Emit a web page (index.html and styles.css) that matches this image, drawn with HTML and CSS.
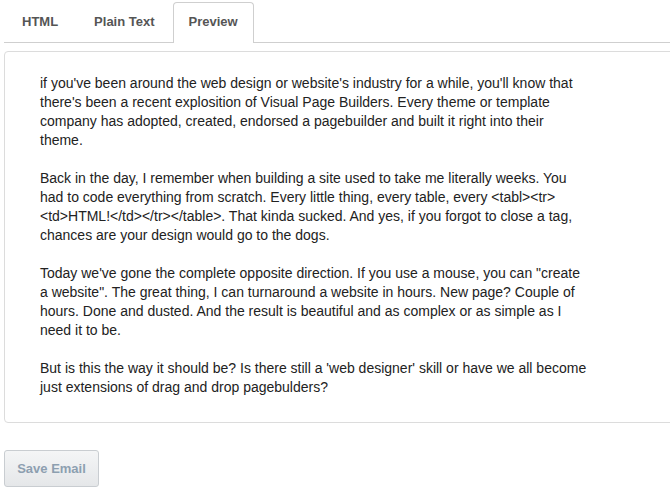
FILE: index.html
```html
<!DOCTYPE html>
<html>
<head>
<meta charset="utf-8">
<link rel="stylesheet" href="styles.css">
</head>
<body>
<div class="page">
  <div class="tabs">
    <div class="tab">HTML</div>
    <div class="tab">Plain Text</div>
    <div class="tab active">Preview</div>
  </div>
  <div class="panel">
    <div class="content">
      <p>if you've been around the web design or website's industry for a while, you'll know that there's been a recent explosition of Visual Page Builders. Every theme or template company has adopted, created, endorsed a pagebuilder and built it right into their theme.</p>
      <p>Back in the day, I remember when building a site used to take me literally weeks. You had to code everything from scratch. Every little thing, every table, every &lt;tabl&gt;&lt;tr&gt;&lt;td&gt;HTML!&lt;/td&gt;&lt;/tr&gt;&lt;/table&gt;. That kinda sucked. And yes, if you forgot to close a tag, chances are your design would go to the dogs.</p>
      <p>Today we've gone the complete opposite direction. If you use a mouse, you can "create a website". The great thing, I can turnaround a website in hours. New page? Couple of hours. Done and dusted. And the result is beautiful and as complex or as simple as I need it to be.</p>
      <p>But is this the way it should be? Is there still a 'web designer' skill or have we all become just extensions of drag and drop pagebulders?</p>
    </div>
  </div>
  <button class="save">Save Email</button>
</div>
</body>
</html>
```
FILE: styles.css
```css
html {
  overflow: hidden;
}
body {
  margin: 0;
  background: #fff;
  font-family: "Liberation Sans", Arial, sans-serif;
}
.page {
  padding: 2px 0 0 4px;
}
.tabs {
  display: flex;
  border-bottom: 1px solid #cfcfcf;
  height: 40px;
  margin-right: -10px;
}
.tab {
  padding: 0 17px;
  font-size: 13px;
  font-weight: bold;
  color: #555;
  line-height: 38px;
  height: 40px;
  box-sizing: border-box;
  border: 1px solid transparent;
  border-bottom: none;
}
.tab.active {
  padding: 0 15px;
  background: #fff;
  border-color: #cfcfcf;
  border-radius: 4px 4px 0 0;
  height: 41px;
  margin-bottom: -1px;
}
.panel {
  margin-top: 8px;
  margin-right: -10px;
  border: 1px solid #dcdcdc;
  border-radius: 4px;
  padding: 22px 35px 25px;
}
.content {
  width: 548px;
  font-size: 14px;
  line-height: 19px;
  color: #222;
}
.content p {
  margin: 0 0 19px;
}
.content p:last-child {
  margin-bottom: 0;
}
.save {
  margin-top: 27px;
  width: 95px;
  height: 37px;
  border: 1px solid #c9cdd1;
  border-radius: 3px;
  background: linear-gradient(#f4f5f6, #e5e7e9);
  color: #8d9fb0;
  font-family: "Liberation Sans", Arial, sans-serif;
  font-size: 13px;
  font-weight: bold;
  padding: 0;
}
```
